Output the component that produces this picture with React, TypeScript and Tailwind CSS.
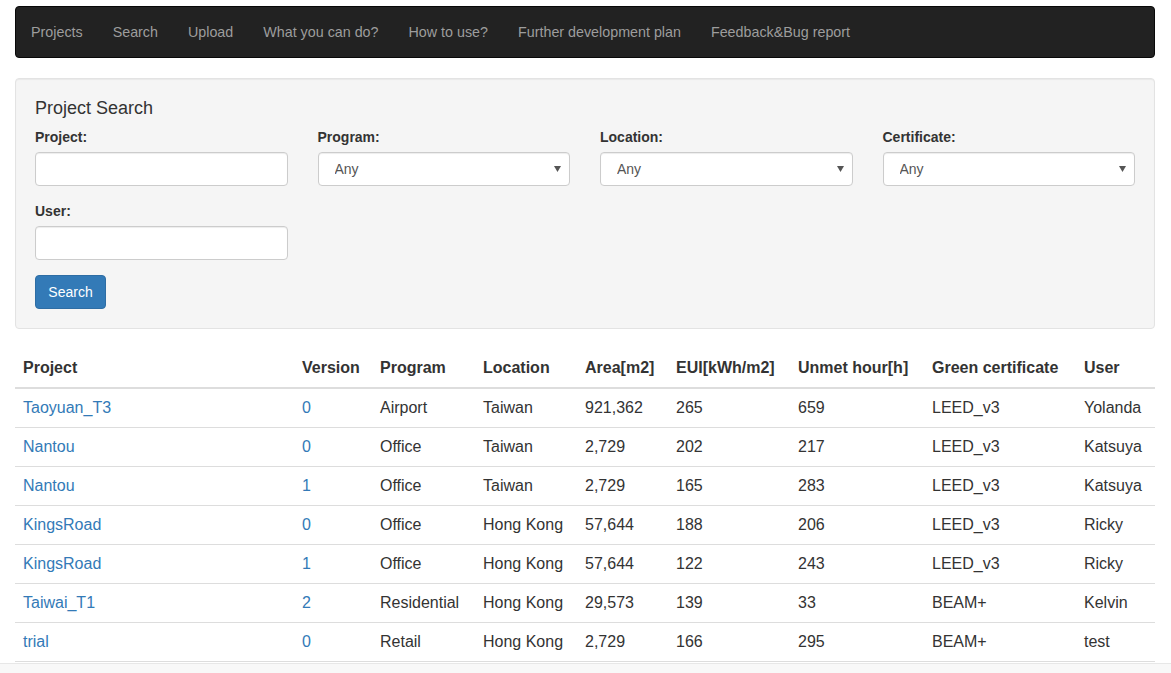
import React from 'react';

// Project list row
interface Row {
  project: string;
  version: number;
  program: string;
  location: string;
  area: string;
  eui: number;
  unmet: number;
  cert: string;
  user: string;
}

const navItems = [
  'Projects',
  'Search',
  'Upload',
  'What you can do?',
  'How to use?',
  'Further development plan',
  'Feedback&Bug report',
];

const rows: Row[] = [
  { project: 'Taoyuan_T3', version: 0, program: 'Airport', location: 'Taiwan', area: '921,362', eui: 265, unmet: 659, cert: 'LEED_v3', user: 'Yolanda' },
  { project: 'Nantou', version: 0, program: 'Office', location: 'Taiwan', area: '2,729', eui: 202, unmet: 217, cert: 'LEED_v3', user: 'Katsuya' },
  { project: 'Nantou', version: 1, program: 'Office', location: 'Taiwan', area: '2,729', eui: 165, unmet: 283, cert: 'LEED_v3', user: 'Katsuya' },
  { project: 'KingsRoad', version: 0, program: 'Office', location: 'Hong Kong', area: '57,644', eui: 188, unmet: 206, cert: 'LEED_v3', user: 'Ricky' },
  { project: 'KingsRoad', version: 1, program: 'Office', location: 'Hong Kong', area: '57,644', eui: 122, unmet: 243, cert: 'LEED_v3', user: 'Ricky' },
  { project: 'Taiwai_T1', version: 2, program: 'Residential', location: 'Hong Kong', area: '29,573', eui: 139, unmet: 33, cert: 'BEAM+', user: 'Kelvin' },
  { project: 'trial', version: 0, program: 'Retail', location: 'Hong Kong', area: '2,729', eui: 166, unmet: 295, cert: 'BEAM+', user: 'test' },
];

const inputCls =
  'block w-full h-[34px] px-3 bg-white border border-[#ccc] rounded-[4px] shadow-[inset_0_1px_1px_rgba(0,0,0,0.075)] text-[14px] text-[#555] outline-none';

const Select: React.FC = () => (
  <div className="relative">
    <select className={inputCls + ' appearance-none pl-[16px]'} defaultValue="any">
      <option value="any">Any</option>
    </select>
    {/* little arrow like the native one */}
    <svg className="absolute right-[9px] top-[14px] pointer-events-none" width="7" height="6" viewBox="0 0 7 6">
      <path d="M0 0h7L3.5 6z" fill="#555" />
    </svg>
  </div>
);

const App: React.FC = () => {
  return (
    <div className="bg-white text-[#333] text-[14px] leading-[20px] font-['Liberation_Sans',Arial,sans-serif]">
      <div className="w-[1140px] ml-[15px] pt-[6px]">
        {/* Navbar */}
        <nav className="h-[52px] bg-[#222] border border-[#080808] rounded-[4px] mb-[20px]">
          <ul className="flex">
            {navItems.map(item => (
              <li key={item}>
                <a href="#" className="block px-[15px] py-[15px] leading-[20px] text-[14.3px] text-[#9d9d9d]">
                  {item}
                </a>
              </li>
            ))}
          </ul>
        </nav>

        {/* Search form */}
        <div className="bg-[#f5f5f5] border border-[#e3e3e3] rounded-[4px] p-[19px] shadow-[inset_0_1px_1px_rgba(0,0,0,0.05)] mb-[20px]">
          <h4 className="text-[18px] leading-[20px] mb-[9px]">Project Search</h4>
          <div className="grid grid-cols-4 gap-x-[30px]">
            <div className="mb-[15px]">
              <label className="block font-bold mb-[5px]">Project:</label>
              <input type="text" className={inputCls} />
            </div>
            <div className="mb-[15px]">
              <label className="block font-bold mb-[5px]">Program:</label>
              <Select />
            </div>
            <div className="mb-[15px]">
              <label className="block font-bold mb-[5px]">Location:</label>
              <Select />
            </div>
            <div className="mb-[15px]">
              <label className="block font-bold mb-[5px]">Certificate:</label>
              <Select />
            </div>
            <div className="mb-[15px]">
              <label className="block font-bold mb-[5px]">User:</label>
              <input type="text" className={inputCls} />
            </div>
          </div>
          <button className="h-[34px] w-[71px] bg-[#337ab7] border border-[#2e6da4] rounded-[4px] text-white text-[14px]">
            Search
          </button>
        </div>

        {/* Results */}
        <table className="w-full table-fixed border-collapse text-[16px] leading-[22px]">
          <colgroup>
            <col className="w-[279px]" />
            <col className="w-[78px]" />
            <col className="w-[103px]" />
            <col className="w-[102px]" />
            <col className="w-[91px]" />
            <col className="w-[122px]" />
            <col className="w-[134px]" />
            <col className="w-[152px]" />
            <col />
          </colgroup>
          <thead>
            <tr className="border-b-2 border-[#ddd]">
              {['Project', 'Version', 'Program', 'Location', 'Area[m2]', 'EUI[kWh/m2]', 'Unmet hour[h]', 'Green certificate', 'User'].map(h => (
                <th key={h} className="p-[8px] text-left font-bold whitespace-nowrap">
                  {h}
                </th>
              ))}
            </tr>
          </thead>
          <tbody>
            {rows.map((r, i) => (
              <tr key={i} className="border-t border-b border-[#ddd]">
                <td className="p-[8px]">
                  <a href="#" className="text-[#337ab7]">{r.project}</a>
                </td>
                <td className="p-[8px]">
                  <a href="#" className="text-[#337ab7]">{r.version}</a>
                </td>
                <td className="p-[8px]">{r.program}</td>
                <td className="p-[8px]">{r.location}</td>
                <td className="p-[8px]">{r.area}</td>
                <td className="p-[8px]">{r.eui}</td>
                <td className="p-[8px]">{r.unmet}</td>
                <td className="p-[8px]">{r.cert}</td>
                <td className="p-[8px]">{r.user}</td>
              </tr>
            ))}
          </tbody>
        </table>
      </div>

      {/* bottom bar */}
      <div className="mt-[1px] h-[10px] bg-[#f8f8f8] border-t border-[#e7e7e7]"></div>
    </div>
  );
};

export default App;
